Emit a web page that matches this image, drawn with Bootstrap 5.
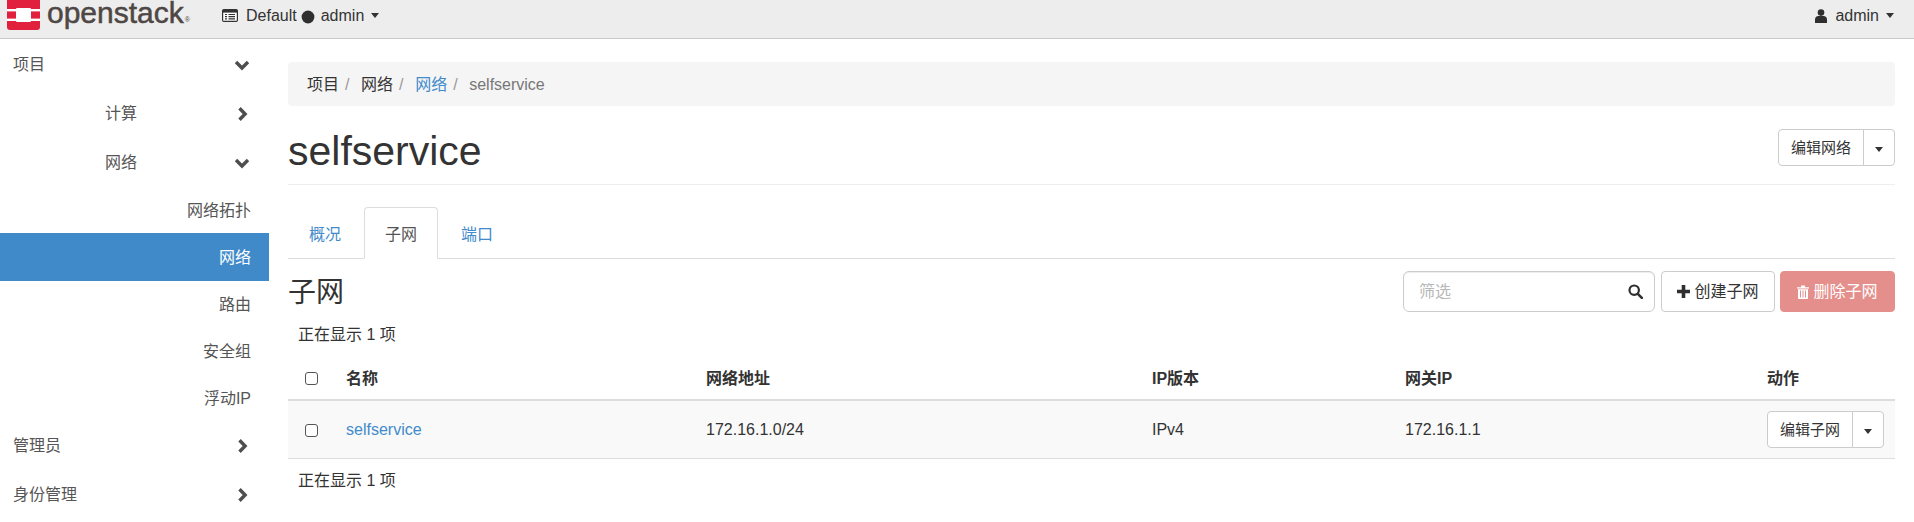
<!DOCTYPE html>
<html lang="zh-CN">
<head>
  <meta charset="UTF-8" />
  <meta name="viewport" content="width=device-width, initial-scale=1.0"/>
  <title>selfservice - OpenStack Dashboard</title>
  <link href="https://cdn.jsdelivr.net/npm/bootstrap@5.3.0/dist/css/bootstrap.min.css" rel="stylesheet">
  <style>
    html, body { height: 522px; overflow: hidden; }
    body { font-family: "Liberation Sans", "Noto Sans CJK SC", sans-serif; font-size: 16px; color: #333; background: #fff; }
    a { text-decoration: none; color: #428bca; }

    .top-bar { height: 39px; background: #ededed; border-bottom: 1px solid #c9c9c9; padding: 0 20px 5px 7px; }
    .brand-box { width: 215px; height: 38px; align-self: flex-start; }
    .brand-name { font-size: 30px; line-height: 26px; color: #4e4744; margin-left: 7px; -webkit-text-stroke: .5px #4e4744; }
    .brand-reg { font-size: 7px; line-height: 8px; color: #4e4744; margin: 16px 0 0 1px; }
    .top-link { color: #333; line-height: 24px; }
    .top-link::after, .caret-only::after { border-top-width: 5px; border-left-width: 4.5px; border-right-width: 4.5px; vertical-align: 2px; margin-left: 7px; }
    .dot-sep { margin: 2px 6px 0 4px; }

    .side-col { width: 269px; flex: none; }
    .side-link { display: flex; align-items: center; color: #555; height: 49px; padding: 3px 19px 0 0; }
    .side-link.lv1 { padding-left: 13px; justify-content: space-between; }
    .side-link.lv2 { padding-left: 105px; justify-content: space-between; }
    .side-link.lv3 { height: 46.6px; justify-content: flex-end; padding-right: 18px; }
    .side-link.on { height: 48px; background: #408ac9; color: #fff; }

    .main-col { padding: 23px 19px 0; min-width: 0; }
    .crumbs { height: 44px; background: #f5f5f5; border-radius: 4px; padding: 2px 19px 0; margin: 0; font-size: 16px; }
    .crumbs .breadcrumb-item { color: #777; padding-left: 4.6px; }
    .crumbs .breadcrumb-item:first-child { padding-left: 0; }
    .crumbs .breadcrumb-item + .breadcrumb-item::before { content: none; }
    .crumbs .breadcrumb-item:not(:last-child)::after { content: "/"; color: #999; padding-left: 6px; padding-right: 7px; }
    .crumbs a.plain { color: #333; }

    .title-row { height: 79px; border-bottom: 1px solid #eee; padding-top: 5px; }
    .title-row h1 { font-size: 41px; line-height: 1; margin: 8px 0 0; color: #333; font-weight: 400; }
    .act-btn { background: #fff; border: 1px solid #ccc; color: #333; border-radius: 4px; }
    .act-btn.main-part { font-size: 15px; padding: 0 12px; height: 37px; line-height: 35px; }
    .act-btn.caret-only { padding: 0 10px; height: 37px; width: 32px; }
    .caret-only::after { margin-left: 0; vertical-align: 1px; }

    .tab-strip { margin-top: 22px; height: 52px; border-bottom: 1px solid #ddd; }
    .tab-strip .nav-link { height: 52px; padding: 2px 20px 0; line-height: 50px; margin-right: 2px; border: 1px solid transparent; border-radius: 4px 4px 0 0; color: #428bca; background: none; }
    .tab-strip .nav-link.active { color: #555; background: #fff; border-color: #ddd #ddd #fff; }

    .sub-bar { margin-top: 12px; height: 41px; }
    .sub-bar h2 { font-size: 28px; line-height: 1; margin: 2px 0 0; font-weight: 400; color: #333; }
    .filter-box { width: 252px; }
    .filter-box .form-control { height: 41px; font-size: 16px; padding: 0 36px 0 15px; border-color: #ccc; box-shadow: inset 0 1px 1px rgba(0,0,0,.075); }
    .filter-box .form-control::placeholder { color: #b8b8b8; }
    .filter-icon { position: absolute; right: 12px; top: 13px; }
    .bar-btn { height: 41px; font-size: 16px; padding: 0; display: inline-flex; align-items: center; justify-content: center; gap: 4px; border-radius: 4px; }
    .bar-btn.add-btn { width: 114px; margin-left: 6px; background: #fff; border: 1px solid #ccc; color: #333; }
    .bar-btn.del-btn { width: 115px; margin-left: 5px; background: #e48f8b; border: 1px solid #e48f8b; color: #fff; opacity: 1; }

    .count-line { height: 24px; line-height: 24px; margin-top: 8px; padding: 2px 0 0 10px; color: #333; }
    .sub-bar + .count-line { margin-top: 9px; }
    .net-table { margin: 7px 0 0; table-layout: fixed; width: 100%; }
    .net-table > * > * > * { vertical-align: middle; color: #333; border-color: #ddd; background: transparent; box-shadow: none; }
    .net-table thead th { height: 48px; border-bottom: 2px solid #ddd; font-weight: 700; padding: 8px 8px 2px; }
    .net-table tbody td { height: 58px; border-bottom: 1px solid #ddd; background: #f9f9f9; padding: 0 8px; }
    .cell-box { height: 57px; display: flex; align-items: center; padding-top: 1px; }
    .cell-box.for-check { padding-top: 2px; }
    .cell-box.for-btn { padding-top: 0; }
    .net-table th:nth-child(1) { width: 50px; }
    .net-table th:nth-child(2) { width: 360px; }
    .net-table th:nth-child(3) { width: 446px; }
    .net-table th:nth-child(4) { width: 253px; }
    .net-table th:nth-child(5) { width: 362px; }
    .net-table th:nth-child(6) { width: 136px; }
    .net-table .form-check-input { width: 13px; height: 13px; margin: 0 0 0 9px; border: 1px solid #555; border-radius: 3px; display: block; float: none; background-color: #fff; }
    .side-chev { flex: none; }
  </style>
</head>
<body>
  <!-- Top bar -->
  <nav class="top-bar d-flex align-items-center">
    <div class="brand-box d-flex align-items-start">
      <svg width="33" height="30" viewBox="0 0 33 30" class="flex-shrink-0">
        <path d="M0 0H33V27a3 3 0 0 1-3 3H3a3 3 0 0 1-3-3Z" fill="#e0203c"/>
        <rect x="0" y="9" width="33" height="2.4" fill="#fff"/>
        <rect x="0" y="18.6" width="33" height="2.4" fill="#fff"/>
        <rect x="9" y="8" width="15" height="14" rx="1" fill="#fff"/>
      </svg>
      <span class="brand-name">openstack</span>
      <span class="brand-reg">&reg;</span>
    </div>
    <div class="dropdown">
      <a href="#" class="top-link dropdown-toggle d-inline-flex align-items-center">
        <svg width="16" height="13" viewBox="0 0 16 13" class="me-2">
          <rect x=".6" y=".6" width="14.8" height="11.8" rx="1.2" fill="#fff" stroke="#333" stroke-width="1.2"/>
          <rect x="1" y="1" width="14" height="2.6" fill="#333"/>
          <path d="M3 5.5h2M6.5 5.5h6.5M3 7.7h2M6.5 7.7h6.5M3 9.9h2M6.5 9.9h6.5" stroke="#333" stroke-width="1.2"/>
        </svg>
        Default<svg width="14" height="14" viewBox="0 0 14 14" class="dot-sep"><circle cx="7" cy="7" r="6.400" fill="#2f2f2f"/></svg>admin
      </a>
    </div>
    <div class="dropdown ms-auto">
      <a href="#" class="top-link dropdown-toggle d-inline-flex align-items-center">
        <svg width="12" height="14" viewBox="0 0 12 14" class="me-2">
          <circle cx="6" cy="3.6" r="3.3" fill="#2f2f2f"/>
          <path d="M0 14V10.2C0 8.3 1.500 7 3.300 7h5.400C10.500 7 12 8.300 12 10.200V14Z" fill="#2f2f2f"/>
        </svg>
        admin
      </a>
    </div>
  </nav>

  <div class="d-flex">
    <!-- Sidebar -->
    <div class="side-col">
      <a href="#" class="side-link lv1">项目
        <svg class="side-chev" width="16" height="11" viewBox="0 0 16 11"><path d="M2 2l6 6 6-6" fill="none" stroke="#4e4e4e" stroke-width="3.4"/></svg></a>
      <a href="#" class="side-link lv2">计算
        <svg class="side-chev" width="16" height="14" viewBox="0 0 16 14"><path d="M5.500 1.200l5.600 5.800-5.600 5.800" fill="none" stroke="#4e4e4e" stroke-width="3.400"/></svg></a>
      <a href="#" class="side-link lv2">网络
        <svg class="side-chev" width="16" height="11" viewBox="0 0 16 11"><path d="M2 2l6 6 6-6" fill="none" stroke="#4e4e4e" stroke-width="3.4"/></svg></a>
      <a href="#" class="side-link lv3">网络拓扑</a>
      <a href="#" class="side-link lv3 on">网络</a>
      <a href="#" class="side-link lv3">路由</a>
      <a href="#" class="side-link lv3">安全组</a>
      <a href="#" class="side-link lv3">浮动IP</a>
      <a href="#" class="side-link lv1">管理员
        <svg class="side-chev" width="16" height="14" viewBox="0 0 16 14"><path d="M5.500 1.200l5.600 5.800-5.600 5.800" fill="none" stroke="#4e4e4e" stroke-width="3.400"/></svg></a>
      <a href="#" class="side-link lv1">身份管理
        <svg class="side-chev" width="16" height="14" viewBox="0 0 16 14"><path d="M5.500 1.200l5.600 5.800-5.600 5.800" fill="none" stroke="#4e4e4e" stroke-width="3.400"/></svg></a>
    </div>

    <!-- Main content -->
    <div class="main-col flex-grow-1">
      <ol class="breadcrumb crumbs align-items-center">
        <li class="breadcrumb-item"><a class="plain" href="#">项目</a></li>
        <li class="breadcrumb-item"><a class="plain" href="#">网络</a></li>
        <li class="breadcrumb-item"><a href="#">网络</a></li>
        <li class="breadcrumb-item active">selfservice</li>
      </ol>

      <div class="title-row d-flex justify-content-between align-items-center">
        <h1>selfservice</h1>
        <div class="btn-group">
          <button type="button" class="btn act-btn main-part">编辑网络</button>
          <button type="button" class="btn act-btn caret-only dropdown-toggle dropdown-toggle-split"></button>
        </div>
      </div>

      <ul class="nav nav-tabs tab-strip">
        <li class="nav-item"><a class="nav-link" href="#">概况</a></li>
        <li class="nav-item"><a class="nav-link active" href="#">子网</a></li>
        <li class="nav-item"><a class="nav-link" href="#">端口</a></li>
      </ul>

      <div class="sub-bar d-flex align-items-center">
        <h2 class="me-auto">子网</h2>
        <div class="filter-box position-relative">
          <input type="text" class="form-control" placeholder="筛选">
          <svg class="filter-icon" width="15" height="15" viewBox="0 0 15 15"><circle cx="6.200" cy="6.200" r="4.700" fill="none" stroke="#2f2f2f" stroke-width="2.200"/><path d="M9.800 9.800l4 4" stroke="#2f2f2f" stroke-width="2.600" stroke-linecap="round"/></svg>
        </div>
        <button type="button" class="btn bar-btn add-btn">
          <svg width="13" height="13" viewBox="0 0 13 13"><path d="M6.500 0v13M0 6.500h13" stroke="#2f2f2f" stroke-width="3.600"/></svg>
          创建子网
        </button>
        <button type="button" class="btn bar-btn del-btn">
          <svg width="12" height="14" viewBox="0 0 12 14"><path d="M0 2.200h12v1.300H0zM4 2.200V.6h4v1.600zM1 4.300h10V13a1 1 0 0 1-1 1H2a1 1 0 0 1-1-1Z" fill="#fff"/><path d="M3.500 5.500v7M6 5.500v7M8.500 5.500v7" stroke="#e48f8b"/></svg>
          删除子网
        </button>
      </div>

      <div class="count-line">正在显示 1 项</div>

      <table class="table net-table">
        <thead>
          <tr>
            <th><input class="form-check-input" type="checkbox"></th>
            <th>名称</th>
            <th>网络地址</th>
            <th>IP版本</th>
            <th>网关IP</th>
            <th>动作</th>
          </tr>
        </thead>
        <tbody>
          <tr>
            <td><div class="cell-box for-check"><input class="form-check-input" type="checkbox"></div></td>
            <td><div class="cell-box"><a href="#">selfservice</a></div></td>
            <td><div class="cell-box">172.16.1.0/24</div></td>
            <td><div class="cell-box">IPv4</div></td>
            <td><div class="cell-box">172.16.1.1</div></td>
            <td>
              <div class="cell-box for-btn">
                <div class="btn-group">
                  <button type="button" class="btn act-btn main-part">编辑子网</button>
                  <button type="button" class="btn act-btn caret-only dropdown-toggle dropdown-toggle-split"></button>
                </div>
              </div>
            </td>
          </tr>
        </tbody>
      </table>

      <div class="count-line">正在显示 1 项</div>
    </div>
  </div>
  <script src="https://cdn.jsdelivr.net/npm/bootstrap@5.3.0/dist/js/bootstrap.bundle.min.js"></script>
</body>
</html>
